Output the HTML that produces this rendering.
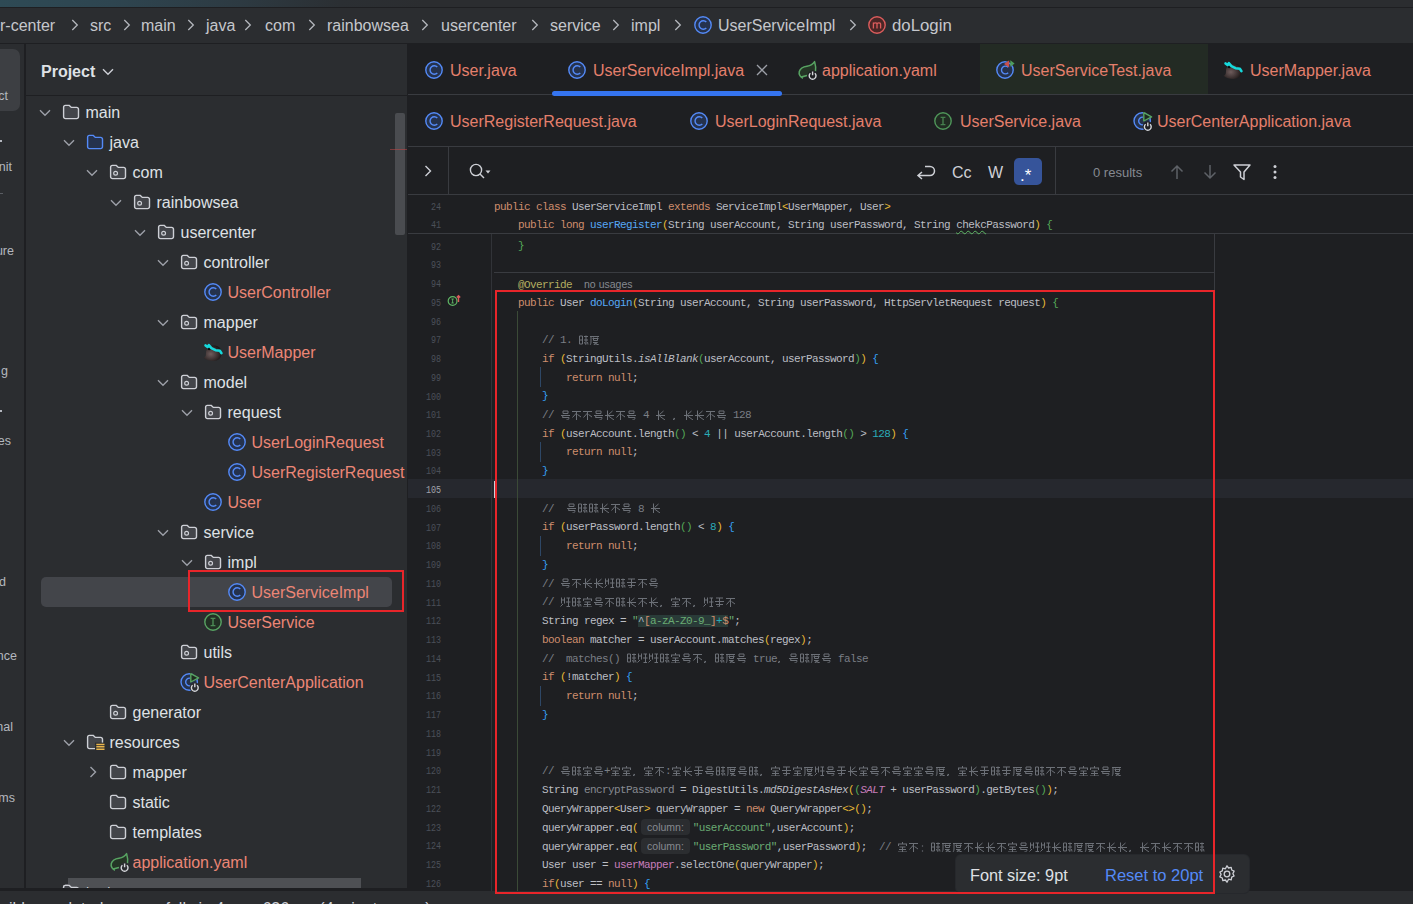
<!DOCTYPE html><html><head><meta charset="utf-8"><style>
html,body{margin:0;padding:0}
body{width:1413px;height:904px;overflow:hidden;position:relative;background:#1E1F22;font-family:"Liberation Sans",sans-serif}
.b{position:absolute}
.t{position:absolute;white-space:pre}
.s{font-family:"Liberation Sans",sans-serif}
.m{font-family:"Liberation Mono",monospace}
.cl{position:absolute;white-space:pre;font-family:"Liberation Mono",monospace;font-size:11px;line-height:21px;letter-spacing:-0.6px;color:#BCBEC4}
.k{color:#CF8E6D}.fn{color:#56A8F5}.st{color:#6AAB73}.n{color:#2AACB8}.c{color:#7A7E85}.an{color:#B3AE60}
.it{font-style:italic}.pu{color:#C77DBB}.un{color:#868A91}
.y{color:#E8BA36}.g{color:#54A857}.bl{color:#359FF4}
.cg{display:inline-block;width:11px;height:10px;vertical-align:-1.5px;overflow:visible}
.cjx{display:inline-block;width:11px;height:10px;vertical-align:-1px;background:linear-gradient(90deg,transparent 0 1px,rgba(122,126,133,.35) 1px 2px,transparent 2px 5px,rgba(122,126,133,.35) 5px 6px,transparent 6px 8px,rgba(122,126,133,.35) 8px 9px,transparent 9px),repeating-linear-gradient(180deg,rgba(122,126,133,.4) 0 1px,transparent 1px 3px);}
.hint{display:inline;font-family:"Liberation Sans",sans-serif;letter-spacing:0;font-size:10.5px;color:#868A91;background:#2B2D30;border-radius:4px;padding:2px 6px;margin:0 3px}
</style></head><body>
<svg width="0" height="0" style="position:absolute"><defs>
<symbol id="g0" viewBox="0 0 11 10"><path d="M1 1.5H10M5.5 1.5V10M5.5 3L1.5 7.5M6.5 4.5L10 7" stroke="#6C7077" stroke-width="1" fill="none"/></symbol>
<symbol id="g1" viewBox="0 0 11 10"><path d="M3 1H8V3.5H3ZM1 5.5H10M3 5.5L2.5 7.5H9C9 9.5 8 10 6.5 9.8" stroke="#6C7077" stroke-width="1" fill="none"/></symbol>
<symbol id="g2" viewBox="0 0 11 10"><path d="M3.5 0.5V10M1 5.5H10M8.5 1L4.5 4.5M4.5 6L10 10" stroke="#6C7077" stroke-width="1" fill="none"/></symbol>
<symbol id="g3" viewBox="0 0 11 10"><path d="M1 1.5H10M2 1.5V7C2 8.5 1.5 9.5 1 10M3.5 3.5H9.5M4.5 2.5V5.5H8.5V2.5M4 7.5H8.5L4.5 10M5.5 8.5L10 10" stroke="#6C7077" stroke-width="1" fill="none"/></symbol>
<symbol id="g4" viewBox="0 0 11 10"><path d="M1.5 0.5V6.5M1.5 3H4.5M4.5 0.5V6.5M0.5 9.5L3 7M6.5 1H10M8.5 1V9.5M6 5H10.5M6.5 9.5H10" stroke="#6C7077" stroke-width="1" fill="none"/></symbol>
<symbol id="g5" viewBox="0 0 11 10"><path d="M2 1H9M1 4.5H10M5.5 1V9.5C5.5 10 4.5 10 3.5 9.5M2 7.5H9" stroke="#6C7077" stroke-width="1" fill="none"/></symbol>
<symbol id="g6" viewBox="0 0 11 10"><path d="M1.5 1H4.5V9H1.5ZM1.5 5H4.5M6 1.5H10M8 0.5V9.5M6 5H10M6.5 7L7.5 9.5M9.5 7L10 9.5" stroke="#6C7077" stroke-width="1" fill="none"/></symbol>
<symbol id="g7" viewBox="0 0 11 10"><path d="M5.5 0V2M1 2H10M1.5 2V4M9.5 2V4M2.5 5H8.5M5.5 5V10M2 7.5H9M1 10H10" stroke="#6C7077" stroke-width="1" fill="none"/></symbol>
<symbol id="gc" viewBox="0 0 11 10"><path d="M2.5 8L1.5 10" stroke="#7A7E85" stroke-width="1.2" fill="none"/></symbol>
<symbol id="gk" viewBox="0 0 11 10"><path d="M3.5 3.5V4.5M3.5 8.5V9.5" stroke="#7A7E85" stroke-width="1.2" fill="none"/></symbol>
</defs></svg>

<div class="b" style="left:0px;top:0px;width:1413px;height:7px;background:linear-gradient(90deg,#2E4A55 0%,#2E4550 8%,#2D3A42 17%,#2B2F33 24%,#2B2D30 30%,#2B2D30 100%);"></div>
<div class="b" style="left:0px;top:7px;width:1413px;height:1px;background:#1E1F22;"></div>
<div class="b" style="left:0px;top:8px;width:1413px;height:35px;background:#2B2D30;"></div>
<div class="b" style="left:0px;top:43px;width:1413px;height:1px;background:#1E1F22;"></div>
<div class="t s" style="left:0px;top:18.46px;font-size:16px;line-height:16px;color:#C5C7CC;">r-center</div>
<div class="t s" style="left:90px;top:18.46px;font-size:16px;line-height:16px;color:#C5C7CC;">src</div>
<div class="t s" style="left:141px;top:18.46px;font-size:16px;line-height:16px;color:#C5C7CC;">main</div>
<div class="t s" style="left:206px;top:18.46px;font-size:16px;line-height:16px;color:#C5C7CC;">java</div>
<div class="t s" style="left:265px;top:18.46px;font-size:16px;line-height:16px;color:#C5C7CC;">com</div>
<div class="t s" style="left:327px;top:18.46px;font-size:16px;line-height:16px;color:#C5C7CC;">rainbowsea</div>
<div class="t s" style="left:441px;top:18.46px;font-size:16px;line-height:16px;color:#C5C7CC;">usercenter</div>
<div class="t s" style="left:550px;top:18.46px;font-size:16px;line-height:16px;color:#C5C7CC;">service</div>
<div class="t s" style="left:631px;top:18.46px;font-size:16px;line-height:16px;color:#C5C7CC;">impl</div>
<svg class="b" style="left:71px;top:19px" width="8" height="12" viewBox="0 0 8 12" fill="none"><path d="M1.3 1L6.3 6L1.3 11" stroke="#B4B7BD" stroke-width="1.3"/></svg>
<svg class="b" style="left:123px;top:19px" width="8" height="12" viewBox="0 0 8 12" fill="none"><path d="M1.3 1L6.3 6L1.3 11" stroke="#B4B7BD" stroke-width="1.3"/></svg>
<svg class="b" style="left:187px;top:19px" width="8" height="12" viewBox="0 0 8 12" fill="none"><path d="M1.3 1L6.3 6L1.3 11" stroke="#B4B7BD" stroke-width="1.3"/></svg>
<svg class="b" style="left:244px;top:19px" width="8" height="12" viewBox="0 0 8 12" fill="none"><path d="M1.3 1L6.3 6L1.3 11" stroke="#B4B7BD" stroke-width="1.3"/></svg>
<svg class="b" style="left:308px;top:19px" width="8" height="12" viewBox="0 0 8 12" fill="none"><path d="M1.3 1L6.3 6L1.3 11" stroke="#B4B7BD" stroke-width="1.3"/></svg>
<svg class="b" style="left:421px;top:19px" width="8" height="12" viewBox="0 0 8 12" fill="none"><path d="M1.3 1L6.3 6L1.3 11" stroke="#B4B7BD" stroke-width="1.3"/></svg>
<svg class="b" style="left:531px;top:19px" width="8" height="12" viewBox="0 0 8 12" fill="none"><path d="M1.3 1L6.3 6L1.3 11" stroke="#B4B7BD" stroke-width="1.3"/></svg>
<svg class="b" style="left:612px;top:19px" width="8" height="12" viewBox="0 0 8 12" fill="none"><path d="M1.3 1L6.3 6L1.3 11" stroke="#B4B7BD" stroke-width="1.3"/></svg>
<svg class="b" style="left:674px;top:19px" width="8" height="12" viewBox="0 0 8 12" fill="none"><path d="M1.3 1L6.3 6L1.3 11" stroke="#B4B7BD" stroke-width="1.3"/></svg>
<svg class="b" style="left:849px;top:19px" width="8" height="12" viewBox="0 0 8 12" fill="none"><path d="M1.3 1L6.3 6L1.3 11" stroke="#B4B7BD" stroke-width="1.3"/></svg>
<svg class="b" style="left:694px;top:16px" width="18" height="18" viewBox="0 0 18 18" fill="none"><circle cx="9" cy="9" r="8.2" fill="#25324D" stroke="#548AF7" stroke-width="1.4"/><path d="M12.3 6.1A4.2 4.2 0 1 0 12.3 11.9" stroke="#548AF7" stroke-width="1.4"/></svg>
<div class="t s" style="left:718px;top:18.46px;font-size:16px;line-height:16px;color:#C5C7CC;">UserServiceImpl</div>
<svg class="b" style="left:868px;top:16px" width="18" height="18" viewBox="0 0 18 18" fill="none"><circle cx="9" cy="9" r="8.2" fill="#4A2626" stroke="#DB5C5C" stroke-width="1.4"/><path d="M5.4 12.4V6.6M5.4 8.2c0-1.7 3.6-2 3.6 0v4.2M9 8.2c0-1.7 3.6-2 3.6 0v4.2" stroke="#DB5C5C" stroke-width="1.3"/></svg>
<div class="t s" style="left:892px;top:17.78px;font-size:16.8px;line-height:16.8px;color:#C5C7CC;">doLogin</div>
<div class="b" style="left:0px;top:44px;width:24px;height:847px;background:#2B2D30;"></div>
<div class="b" style="left:24px;top:44px;width:2px;height:847px;background:#1E1F22;"></div>
<div class="b" style="left:0px;top:49px;width:20px;height:62px;background:#3D3F43;border-radius:0 7px 7px 0"></div>
<div class="t s" style="left:0px;top:90.42px;font-size:12.5px;line-height:12.5px;color:#B4B8BF;transform:translateX(calc(8px - 100%));">ct</div>
<div class="t s" style="left:0px;top:161.42px;font-size:12.5px;line-height:12.5px;color:#B4B8BF;transform:translateX(calc(12px - 100%));">nit</div>
<div class="t s" style="left:0px;top:245.42px;font-size:12.5px;line-height:12.5px;color:#B4B8BF;transform:translateX(calc(14px - 100%));">ure</div>
<div class="t s" style="left:0px;top:365.42px;font-size:12.5px;line-height:12.5px;color:#B4B8BF;transform:translateX(calc(8px - 100%));">g</div>
<div class="t s" style="left:0px;top:435.42px;font-size:12.5px;line-height:12.5px;color:#B4B8BF;transform:translateX(calc(11px - 100%));">es</div>
<div class="t s" style="left:0px;top:576.42px;font-size:12.5px;line-height:12.5px;color:#B4B8BF;transform:translateX(calc(6px - 100%));">d</div>
<div class="t s" style="left:0px;top:650.42px;font-size:12.5px;line-height:12.5px;color:#B4B8BF;transform:translateX(calc(17px - 100%));">nce</div>
<div class="t s" style="left:0px;top:721.42px;font-size:12.5px;line-height:12.5px;color:#B4B8BF;transform:translateX(calc(13px - 100%));">nal</div>
<div class="t s" style="left:0px;top:792.42px;font-size:12.5px;line-height:12.5px;color:#B4B8BF;transform:translateX(calc(15px - 100%));">ms</div>
<div class="b" style="left:0px;top:140px;width:2px;height:2px;background:#B4B8BF;"></div>
<div class="b" style="left:0px;top:193px;width:3px;height:1px;background:#5A5D63;"></div>
<div class="b" style="left:0px;top:410px;width:2px;height:2px;background:#B4B8BF;"></div>
<div class="b" style="left:26px;top:44px;width:381px;height:847px;background:#2B2D30;"></div>
<div class="b" style="left:26px;top:95px;width:381px;height:1px;background:#1E1F22;"></div>
<div class="t s" style="left:41px;top:64.46px;font-size:16px;line-height:16px;color:#DFE1E5;font-weight:bold;">Project</div>
<svg class="b" style="left:102px;top:68px" width="12" height="8" viewBox="0 0 12 8" fill="none"><path d="M1 1.2L6 6.2L11 1.2" stroke="#CED0D6" stroke-width="1.4"/></svg>
<div class="b" style="left:395px;top:113px;width:10px;height:122px;background:#4A4C50;border-radius:2px"></div>
<div class="b" style="left:390px;top:149px;width:17px;height:1px;background:rgba(190,70,70,0.55);"></div>
<div class="b" style="left:41px;top:577px;width:351px;height:30px;background:#43454A;border-radius:5px"></div>
<svg class="b" style="left:39px;top:109px" width="12" height="8" viewBox="0 0 12 8" fill="none"><path d="M1 1.2L6 6.2L11 1.2" stroke="#9DA0A8" stroke-width="1.4"/></svg>
<svg class="b" style="left:62px;top:104px" width="20" height="17" viewBox="0 0 20 17" fill="none"><path d="M1.6 3.2a1.8 1.8 0 0 1 1.8-1.8h3.9l2 2h5.4a1.8 1.8 0 0 1 1.8 1.8v7.6a1.8 1.8 0 0 1-1.8 1.8H3.4a1.8 1.8 0 0 1-1.8-1.8z" fill="#43454A" stroke="#CED0D6" stroke-width="1.4"/></svg>
<div class="t s" style="left:85.5px;top:105.46px;font-size:16px;line-height:16px;color:#DFE1E5;">main</div>
<svg class="b" style="left:63px;top:139px" width="12" height="8" viewBox="0 0 12 8" fill="none"><path d="M1 1.2L6 6.2L11 1.2" stroke="#9DA0A8" stroke-width="1.4"/></svg>
<svg class="b" style="left:86px;top:134px" width="20" height="17" viewBox="0 0 20 17" fill="none"><path d="M1.6 3.2a1.8 1.8 0 0 1 1.8-1.8h3.9l2 2h5.4a1.8 1.8 0 0 1 1.8 1.8v7.6a1.8 1.8 0 0 1-1.8 1.8H3.4a1.8 1.8 0 0 1-1.8-1.8z" fill="#25324D" stroke="#548AF7" stroke-width="1.4"/></svg>
<div class="t s" style="left:109.5px;top:135.46px;font-size:16px;line-height:16px;color:#DFE1E5;">java</div>
<svg class="b" style="left:86px;top:169px" width="12" height="8" viewBox="0 0 12 8" fill="none"><path d="M1 1.2L6 6.2L11 1.2" stroke="#9DA0A8" stroke-width="1.4"/></svg>
<svg class="b" style="left:109px;top:164px" width="20" height="17" viewBox="0 0 20 17" fill="none"><path d="M1.6 3.2a1.8 1.8 0 0 1 1.8-1.8h3.9l2 2h5.4a1.8 1.8 0 0 1 1.8 1.8v7.6a1.8 1.8 0 0 1-1.8 1.8H3.4a1.8 1.8 0 0 1-1.8-1.8z" fill="#43454A" stroke="#CED0D6" stroke-width="1.4"/><circle cx="6.6" cy="9.2" r="1.9" stroke="#CED0D6" stroke-width="1.2"/></svg>
<div class="t s" style="left:132.5px;top:165.46px;font-size:16px;line-height:16px;color:#DFE1E5;">com</div>
<svg class="b" style="left:110px;top:199px" width="12" height="8" viewBox="0 0 12 8" fill="none"><path d="M1 1.2L6 6.2L11 1.2" stroke="#9DA0A8" stroke-width="1.4"/></svg>
<svg class="b" style="left:133px;top:194px" width="20" height="17" viewBox="0 0 20 17" fill="none"><path d="M1.6 3.2a1.8 1.8 0 0 1 1.8-1.8h3.9l2 2h5.4a1.8 1.8 0 0 1 1.8 1.8v7.6a1.8 1.8 0 0 1-1.8 1.8H3.4a1.8 1.8 0 0 1-1.8-1.8z" fill="#43454A" stroke="#CED0D6" stroke-width="1.4"/><circle cx="6.6" cy="9.2" r="1.9" stroke="#CED0D6" stroke-width="1.2"/></svg>
<div class="t s" style="left:156.5px;top:195.46px;font-size:16px;line-height:16px;color:#DFE1E5;">rainbowsea</div>
<svg class="b" style="left:134px;top:229px" width="12" height="8" viewBox="0 0 12 8" fill="none"><path d="M1 1.2L6 6.2L11 1.2" stroke="#9DA0A8" stroke-width="1.4"/></svg>
<svg class="b" style="left:157px;top:224px" width="20" height="17" viewBox="0 0 20 17" fill="none"><path d="M1.6 3.2a1.8 1.8 0 0 1 1.8-1.8h3.9l2 2h5.4a1.8 1.8 0 0 1 1.8 1.8v7.6a1.8 1.8 0 0 1-1.8 1.8H3.4a1.8 1.8 0 0 1-1.8-1.8z" fill="#43454A" stroke="#CED0D6" stroke-width="1.4"/><circle cx="6.6" cy="9.2" r="1.9" stroke="#CED0D6" stroke-width="1.2"/></svg>
<div class="t s" style="left:180.5px;top:225.46px;font-size:16px;line-height:16px;color:#DFE1E5;">usercenter</div>
<svg class="b" style="left:157px;top:259px" width="12" height="8" viewBox="0 0 12 8" fill="none"><path d="M1 1.2L6 6.2L11 1.2" stroke="#9DA0A8" stroke-width="1.4"/></svg>
<svg class="b" style="left:180px;top:254px" width="20" height="17" viewBox="0 0 20 17" fill="none"><path d="M1.6 3.2a1.8 1.8 0 0 1 1.8-1.8h3.9l2 2h5.4a1.8 1.8 0 0 1 1.8 1.8v7.6a1.8 1.8 0 0 1-1.8 1.8H3.4a1.8 1.8 0 0 1-1.8-1.8z" fill="#43454A" stroke="#CED0D6" stroke-width="1.4"/><circle cx="6.6" cy="9.2" r="1.9" stroke="#CED0D6" stroke-width="1.2"/></svg>
<div class="t s" style="left:203.5px;top:255.46px;font-size:16px;line-height:16px;color:#DFE1E5;">controller</div>
<svg class="b" style="left:204px;top:283px" width="18" height="18" viewBox="0 0 18 18" fill="none"><circle cx="9" cy="9" r="8.2" fill="#25324D" stroke="#548AF7" stroke-width="1.4"/><path d="M12.3 6.1A4.2 4.2 0 1 0 12.3 11.9" stroke="#548AF7" stroke-width="1.4"/></svg>
<div class="t s" style="left:227.5px;top:285.46px;font-size:16px;line-height:16px;color:#EC8676;">UserController</div>
<svg class="b" style="left:157px;top:319px" width="12" height="8" viewBox="0 0 12 8" fill="none"><path d="M1 1.2L6 6.2L11 1.2" stroke="#9DA0A8" stroke-width="1.4"/></svg>
<svg class="b" style="left:180px;top:314px" width="20" height="17" viewBox="0 0 20 17" fill="none"><path d="M1.6 3.2a1.8 1.8 0 0 1 1.8-1.8h3.9l2 2h5.4a1.8 1.8 0 0 1 1.8 1.8v7.6a1.8 1.8 0 0 1-1.8 1.8H3.4a1.8 1.8 0 0 1-1.8-1.8z" fill="#43454A" stroke="#CED0D6" stroke-width="1.4"/><circle cx="6.6" cy="9.2" r="1.9" stroke="#CED0D6" stroke-width="1.2"/></svg>
<div class="t s" style="left:203.5px;top:315.46px;font-size:16px;line-height:16px;color:#DFE1E5;">mapper</div>
<svg class="b" style="left:203px;top:343px" width="20" height="20" viewBox="0 0 20 20" fill="none"><defs><radialGradient id="bg1" cx="0.4" cy="0.55" r="0.65"><stop offset="0" stop-color="#6E5C5C"/><stop offset="0.55" stop-color="#3E3333"/><stop offset="1" stop-color="#141111"/></radialGradient></defs><path d="M3 9C3.5 4.5 7.5 2.2 11.5 2.5C16 3 19 6.2 18.8 10.5C18.6 15 15 18 10.5 18C6.5 18 3 17 0.5 14.8C3 14 3 12 3 9Z" fill="url(#bg1)"/><circle cx="6.2" cy="5.6" r="1.7" fill="#0A0A0A"/><path d="M2.6 2.4L4.6 4L5.8 2.2L8.4 5.2L12.5 7.2L17 7.8L18.4 10.2" stroke="#16D9DC" stroke-width="2.6" stroke-linejoin="round" stroke-linecap="round"/></svg>
<div class="t s" style="left:227.5px;top:345.46px;font-size:16px;line-height:16px;color:#EC8676;">UserMapper</div>
<svg class="b" style="left:157px;top:379px" width="12" height="8" viewBox="0 0 12 8" fill="none"><path d="M1 1.2L6 6.2L11 1.2" stroke="#9DA0A8" stroke-width="1.4"/></svg>
<svg class="b" style="left:180px;top:374px" width="20" height="17" viewBox="0 0 20 17" fill="none"><path d="M1.6 3.2a1.8 1.8 0 0 1 1.8-1.8h3.9l2 2h5.4a1.8 1.8 0 0 1 1.8 1.8v7.6a1.8 1.8 0 0 1-1.8 1.8H3.4a1.8 1.8 0 0 1-1.8-1.8z" fill="#43454A" stroke="#CED0D6" stroke-width="1.4"/><circle cx="6.6" cy="9.2" r="1.9" stroke="#CED0D6" stroke-width="1.2"/></svg>
<div class="t s" style="left:203.5px;top:375.46px;font-size:16px;line-height:16px;color:#DFE1E5;">model</div>
<svg class="b" style="left:181px;top:409px" width="12" height="8" viewBox="0 0 12 8" fill="none"><path d="M1 1.2L6 6.2L11 1.2" stroke="#9DA0A8" stroke-width="1.4"/></svg>
<svg class="b" style="left:204px;top:404px" width="20" height="17" viewBox="0 0 20 17" fill="none"><path d="M1.6 3.2a1.8 1.8 0 0 1 1.8-1.8h3.9l2 2h5.4a1.8 1.8 0 0 1 1.8 1.8v7.6a1.8 1.8 0 0 1-1.8 1.8H3.4a1.8 1.8 0 0 1-1.8-1.8z" fill="#43454A" stroke="#CED0D6" stroke-width="1.4"/><circle cx="6.6" cy="9.2" r="1.9" stroke="#CED0D6" stroke-width="1.2"/></svg>
<div class="t s" style="left:227.5px;top:405.46px;font-size:16px;line-height:16px;color:#DFE1E5;">request</div>
<svg class="b" style="left:228px;top:433px" width="18" height="18" viewBox="0 0 18 18" fill="none"><circle cx="9" cy="9" r="8.2" fill="#25324D" stroke="#548AF7" stroke-width="1.4"/><path d="M12.3 6.1A4.2 4.2 0 1 0 12.3 11.9" stroke="#548AF7" stroke-width="1.4"/></svg>
<div class="t s" style="left:251.5px;top:435.46px;font-size:16px;line-height:16px;color:#EC8676;">UserLoginRequest</div>
<svg class="b" style="left:228px;top:463px" width="18" height="18" viewBox="0 0 18 18" fill="none"><circle cx="9" cy="9" r="8.2" fill="#25324D" stroke="#548AF7" stroke-width="1.4"/><path d="M12.3 6.1A4.2 4.2 0 1 0 12.3 11.9" stroke="#548AF7" stroke-width="1.4"/></svg>
<div class="t s" style="left:251.5px;top:465.46px;font-size:16px;line-height:16px;color:#EC8676;">UserRegisterRequest</div>
<svg class="b" style="left:204px;top:493px" width="18" height="18" viewBox="0 0 18 18" fill="none"><circle cx="9" cy="9" r="8.2" fill="#25324D" stroke="#548AF7" stroke-width="1.4"/><path d="M12.3 6.1A4.2 4.2 0 1 0 12.3 11.9" stroke="#548AF7" stroke-width="1.4"/></svg>
<div class="t s" style="left:227.5px;top:495.46px;font-size:16px;line-height:16px;color:#EC8676;">User</div>
<svg class="b" style="left:157px;top:529px" width="12" height="8" viewBox="0 0 12 8" fill="none"><path d="M1 1.2L6 6.2L11 1.2" stroke="#9DA0A8" stroke-width="1.4"/></svg>
<svg class="b" style="left:180px;top:524px" width="20" height="17" viewBox="0 0 20 17" fill="none"><path d="M1.6 3.2a1.8 1.8 0 0 1 1.8-1.8h3.9l2 2h5.4a1.8 1.8 0 0 1 1.8 1.8v7.6a1.8 1.8 0 0 1-1.8 1.8H3.4a1.8 1.8 0 0 1-1.8-1.8z" fill="#43454A" stroke="#CED0D6" stroke-width="1.4"/><circle cx="6.6" cy="9.2" r="1.9" stroke="#CED0D6" stroke-width="1.2"/></svg>
<div class="t s" style="left:203.5px;top:525.46px;font-size:16px;line-height:16px;color:#DFE1E5;">service</div>
<svg class="b" style="left:181px;top:559px" width="12" height="8" viewBox="0 0 12 8" fill="none"><path d="M1 1.2L6 6.2L11 1.2" stroke="#9DA0A8" stroke-width="1.4"/></svg>
<svg class="b" style="left:204px;top:554px" width="20" height="17" viewBox="0 0 20 17" fill="none"><path d="M1.6 3.2a1.8 1.8 0 0 1 1.8-1.8h3.9l2 2h5.4a1.8 1.8 0 0 1 1.8 1.8v7.6a1.8 1.8 0 0 1-1.8 1.8H3.4a1.8 1.8 0 0 1-1.8-1.8z" fill="#43454A" stroke="#CED0D6" stroke-width="1.4"/><circle cx="6.6" cy="9.2" r="1.9" stroke="#CED0D6" stroke-width="1.2"/></svg>
<div class="t s" style="left:227.5px;top:555.46px;font-size:16px;line-height:16px;color:#DFE1E5;">impl</div>
<svg class="b" style="left:228px;top:583px" width="18" height="18" viewBox="0 0 18 18" fill="none"><circle cx="9" cy="9" r="8.2" fill="#25324D" stroke="#548AF7" stroke-width="1.4"/><path d="M12.3 6.1A4.2 4.2 0 1 0 12.3 11.9" stroke="#548AF7" stroke-width="1.4"/></svg>
<div class="t s" style="left:251.5px;top:585.46px;font-size:16px;line-height:16px;color:#EC8676;">UserServiceImpl</div>
<svg class="b" style="left:204px;top:613px" width="18" height="18" viewBox="0 0 18 18" fill="none"><circle cx="9" cy="9" r="8.2" fill="#223024" stroke="#58A463" stroke-width="1.4"/><path d="M6.6 5.4h4.8M9 5.4v7.2M6.6 12.6h4.8" stroke="#58A463" stroke-width="1.4" opacity="0.8"/></svg>
<div class="t s" style="left:227.5px;top:615.46px;font-size:16px;line-height:16px;color:#EC8676;">UserService</div>
<svg class="b" style="left:180px;top:644px" width="20" height="17" viewBox="0 0 20 17" fill="none"><path d="M1.6 3.2a1.8 1.8 0 0 1 1.8-1.8h3.9l2 2h5.4a1.8 1.8 0 0 1 1.8 1.8v7.6a1.8 1.8 0 0 1-1.8 1.8H3.4a1.8 1.8 0 0 1-1.8-1.8z" fill="#43454A" stroke="#CED0D6" stroke-width="1.4"/><circle cx="6.6" cy="9.2" r="1.9" stroke="#CED0D6" stroke-width="1.2"/></svg>
<div class="t s" style="left:203.5px;top:645.46px;font-size:16px;line-height:16px;color:#DFE1E5;">utils</div>
<svg class="b" style="left:180px;top:672px" width="20" height="20" viewBox="0 0 20 20" fill="none"><circle cx="9.2" cy="10" r="8.2" fill="#25324D" stroke="#548AF7" stroke-width="1.4"/><path d="M12.4 7.3A3.9 3.9 0 1 0 12.4 12.7" stroke="#548AF7" stroke-width="1.4"/><path d="M10 0.6L19.6 5.8L10 11Z" fill="#2B2D30"/><path d="M10.8 1.6L18.6 5.8L10.8 10Z" fill="#1F2B20" stroke="#58A463" stroke-width="1.4" stroke-linejoin="round"/><circle cx="14.8" cy="15.4" r="5" fill="#2B2D30"/><path d="M12.6 13.2a3.4 3.4 0 1 0 4.4 0M14.8 11.6v3.6" stroke="#D5D7DB" stroke-width="1.4"/></svg>
<div class="t s" style="left:203.5px;top:675.46px;font-size:16px;line-height:16px;color:#EC8676;">UserCenterApplication</div>
<svg class="b" style="left:109px;top:704px" width="20" height="17" viewBox="0 0 20 17" fill="none"><path d="M1.6 3.2a1.8 1.8 0 0 1 1.8-1.8h3.9l2 2h5.4a1.8 1.8 0 0 1 1.8 1.8v7.6a1.8 1.8 0 0 1-1.8 1.8H3.4a1.8 1.8 0 0 1-1.8-1.8z" fill="#43454A" stroke="#CED0D6" stroke-width="1.4"/><circle cx="6.6" cy="9.2" r="1.9" stroke="#CED0D6" stroke-width="1.2"/></svg>
<div class="t s" style="left:132.5px;top:705.46px;font-size:16px;line-height:16px;color:#DFE1E5;">generator</div>
<svg class="b" style="left:63px;top:739px" width="12" height="8" viewBox="0 0 12 8" fill="none"><path d="M1 1.2L6 6.2L11 1.2" stroke="#9DA0A8" stroke-width="1.4"/></svg>
<svg class="b" style="left:86px;top:734px" width="20" height="17" viewBox="0 0 20 17" fill="none"><path d="M1.6 3.2a1.8 1.8 0 0 1 1.8-1.8h3.9l2 2h5.4a1.8 1.8 0 0 1 1.8 1.8v7.6a1.8 1.8 0 0 1-1.8 1.8H3.4a1.8 1.8 0 0 1-1.8-1.8z" fill="#43454A" stroke="#CED0D6" stroke-width="1.4"/><rect x="9" y="8.6" width="10" height="8" fill="#2B2D30"/><path d="M10.3 10.4h8.2M10.3 12.8h8.2M10.3 15.2h8.2" stroke="#E9B54C" stroke-width="1.5"/></svg>
<div class="t s" style="left:109.5px;top:735.46px;font-size:16px;line-height:16px;color:#DFE1E5;">resources</div>
<svg class="b" style="left:89px;top:766px" width="8" height="12" viewBox="0 0 8 12" fill="none"><path d="M1.5 1L6.5 6L1.5 11" stroke="#9DA0A8" stroke-width="1.4"/></svg>
<svg class="b" style="left:109px;top:764px" width="20" height="17" viewBox="0 0 20 17" fill="none"><path d="M1.6 3.2a1.8 1.8 0 0 1 1.8-1.8h3.9l2 2h5.4a1.8 1.8 0 0 1 1.8 1.8v7.6a1.8 1.8 0 0 1-1.8 1.8H3.4a1.8 1.8 0 0 1-1.8-1.8z" fill="#43454A" stroke="#CED0D6" stroke-width="1.4"/></svg>
<div class="t s" style="left:132.5px;top:765.46px;font-size:16px;line-height:16px;color:#DFE1E5;">mapper</div>
<svg class="b" style="left:109px;top:794px" width="20" height="17" viewBox="0 0 20 17" fill="none"><path d="M1.6 3.2a1.8 1.8 0 0 1 1.8-1.8h3.9l2 2h5.4a1.8 1.8 0 0 1 1.8 1.8v7.6a1.8 1.8 0 0 1-1.8 1.8H3.4a1.8 1.8 0 0 1-1.8-1.8z" fill="#43454A" stroke="#CED0D6" stroke-width="1.4"/></svg>
<div class="t s" style="left:132.5px;top:795.46px;font-size:16px;line-height:16px;color:#DFE1E5;">static</div>
<svg class="b" style="left:109px;top:824px" width="20" height="17" viewBox="0 0 20 17" fill="none"><path d="M1.6 3.2a1.8 1.8 0 0 1 1.8-1.8h3.9l2 2h5.4a1.8 1.8 0 0 1 1.8 1.8v7.6a1.8 1.8 0 0 1-1.8 1.8H3.4a1.8 1.8 0 0 1-1.8-1.8z" fill="#43454A" stroke="#CED0D6" stroke-width="1.4"/></svg>
<div class="t s" style="left:132.5px;top:825.46px;font-size:16px;line-height:16px;color:#DFE1E5;">templates</div>
<svg class="b" style="left:109px;top:852px" width="20" height="20" viewBox="0 0 20 20" fill="none"><path d="M6 18.2C3.5 17.5 1.5 14.5 2.3 11.5C3.2 8.3 6.5 6.7 10 6.2C13.5 5.7 16 4.3 17.6 1.6C18.6 5 19 8.5 18.5 11.5" fill="#243425" stroke="#58A463" stroke-width="1.5" stroke-linejoin="round"/><path d="M4 17L10 15.5" stroke="#58A463" stroke-width="1.5"/><circle cx="15.6" cy="15.4" r="5" fill="#2B2D30"/><path d="M13.4 13.2a3.4 3.4 0 1 0 4.4 0M15.6 11.6v3.6" stroke="#D5D7DB" stroke-width="1.4"/></svg>
<div class="t s" style="left:132.5px;top:855.46px;font-size:16px;line-height:16px;color:#EC8676;">application.yaml</div>
<svg class="b" style="left:62px;top:884px" width="20" height="17" viewBox="0 0 20 17" fill="none"><path d="M1.6 3.2a1.8 1.8 0 0 1 1.8-1.8h3.9l2 2h5.4a1.8 1.8 0 0 1 1.8 1.8v7.6a1.8 1.8 0 0 1-1.8 1.8H3.4a1.8 1.8 0 0 1-1.8-1.8z" fill="#43454A" stroke="#CED0D6" stroke-width="1.4"/></svg>
<div class="t s" style="left:85.5px;top:885.46px;font-size:16px;line-height:16px;color:#DFE1E5;">test</div>
<div class="b" style="left:68px;top:878px;width:293px;height:10px;background:#4E5054;"></div>
<svg class="b" style="left:62px;top:884px" width="20" height="17" viewBox="0 0 20 17" fill="none"><path d="M1.6 3.2a1.8 1.8 0 0 1 1.8-1.8h3.9l2 2h5.4a1.8 1.8 0 0 1 1.8 1.8v7.6a1.8 1.8 0 0 1-1.8 1.8H3.4a1.8 1.8 0 0 1-1.8-1.8z" fill="#43454A" stroke="#CED0D6" stroke-width="1.4"/></svg>
<div class="t s" style="left:85.5px;top:885.46px;font-size:16px;line-height:16px;color:#DFE1E5;">test</div>
<div class="b" style="left:188px;top:570px;width:216px;height:42px;background:transparent;border:2px solid #E8252A;box-sizing:border-box"></div>
<div class="b" style="left:0px;top:891px;width:1413px;height:13px;background:#2B2D30;"></div>
<div class="b" style="left:0px;top:888px;width:1413px;height:3px;background:#1E1F22;"></div>
<div class="t s" style="left:9px;top:900.96px;font-size:16px;line-height:16px;color:#CED0D6;">ild completed successfully in 4 sec, 636 ms (4 minutes ago)</div>
<div class="b" style="left:407px;top:44px;width:1px;height:847px;background:#1E1F22;"></div>
<div class="b" style="left:408px;top:94px;width:1005px;height:1px;background:#393B40;"></div>
<div class="b" style="left:408px;top:146px;width:1005px;height:1px;background:#393B40;"></div>
<div class="b" style="left:408px;top:194px;width:1005px;height:1px;background:#393B40;"></div>
<div class="b" style="left:980px;top:44px;width:228px;height:50px;background:#232B24;"></div>
<svg class="b" style="left:425px;top:61px" width="18" height="18" viewBox="0 0 18 18" fill="none"><circle cx="9" cy="9" r="8.2" fill="#25324D" stroke="#548AF7" stroke-width="1.4"/><path d="M12.3 6.1A4.2 4.2 0 1 0 12.3 11.9" stroke="#548AF7" stroke-width="1.4"/></svg>
<div class="t s" style="left:450px;top:63.46px;font-size:16px;line-height:16px;color:#E47F6C;">User.java</div>
<svg class="b" style="left:568px;top:61px" width="18" height="18" viewBox="0 0 18 18" fill="none"><circle cx="9" cy="9" r="8.2" fill="#25324D" stroke="#548AF7" stroke-width="1.4"/><path d="M12.3 6.1A4.2 4.2 0 1 0 12.3 11.9" stroke="#548AF7" stroke-width="1.4"/></svg>
<div class="t s" style="left:593px;top:63.46px;font-size:16px;line-height:16px;color:#E47F6C;">UserServiceImpl.java</div>
<svg class="b" style="left:797px;top:60px" width="20" height="20" viewBox="0 0 20 20" fill="none"><path d="M6 18.2C3.5 17.5 1.5 14.5 2.3 11.5C3.2 8.3 6.5 6.7 10 6.2C13.5 5.7 16 4.3 17.6 1.6C18.6 5 19 8.5 18.5 11.5" fill="#243425" stroke="#58A463" stroke-width="1.5" stroke-linejoin="round"/><path d="M4 17L10 15.5" stroke="#58A463" stroke-width="1.5"/><circle cx="15.6" cy="15.4" r="5" fill="#1E1F22"/><path d="M13.4 13.2a3.4 3.4 0 1 0 4.4 0M15.6 11.6v3.6" stroke="#D5D7DB" stroke-width="1.4"/></svg>
<div class="t s" style="left:822px;top:63.46px;font-size:16px;line-height:16px;color:#E47F6C;">application.yaml</div>
<svg class="b" style="left:996px;top:60px" width="20" height="20" viewBox="0 0 20 20" fill="none"><circle cx="9" cy="10" r="8.2" fill="#25324D" stroke="#548AF7" stroke-width="1.4"/><path d="M12.2 7.3A3.9 3.9 0 1 0 12.2 12.7" stroke="#548AF7" stroke-width="1.4"/><path d="M13.2 0.2V7.6L8 4Z" fill="#C9504C"/><path d="M14.3 0.2L18.6 3.4L14.3 6.8Z" fill="#4F9E5C"/></svg>
<div class="t s" style="left:1021px;top:63.46px;font-size:16px;line-height:16px;color:#E47F6C;">UserServiceTest.java</div>
<svg class="b" style="left:1223px;top:61px" width="20" height="20" viewBox="0 0 20 20" fill="none"><defs><radialGradient id="bg1" cx="0.4" cy="0.55" r="0.65"><stop offset="0" stop-color="#6E5C5C"/><stop offset="0.55" stop-color="#3E3333"/><stop offset="1" stop-color="#141111"/></radialGradient></defs><path d="M3 9C3.5 4.5 7.5 2.2 11.5 2.5C16 3 19 6.2 18.8 10.5C18.6 15 15 18 10.5 18C6.5 18 3 17 0.5 14.8C3 14 3 12 3 9Z" fill="url(#bg1)"/><circle cx="6.2" cy="5.6" r="1.7" fill="#0A0A0A"/><path d="M2.6 2.4L4.6 4L5.8 2.2L8.4 5.2L12.5 7.2L17 7.8L18.4 10.2" stroke="#16D9DC" stroke-width="2.6" stroke-linejoin="round" stroke-linecap="round"/></svg>
<div class="t s" style="left:1250px;top:63.46px;font-size:16px;line-height:16px;color:#E47F6C;">UserMapper.java</div>
<svg class="b" style="left:756px;top:64px" width="12" height="12" viewBox="0 0 12 12" fill="none"><path d="M1 1L11 11M11 1L1 11" stroke="#9DA0A8" stroke-width="1.3"/></svg>
<div class="b" style="left:552px;top:91px;width:230px;height:5px;background:#3574F0;border-radius:3px"></div>
<svg class="b" style="left:425px;top:112px" width="18" height="18" viewBox="0 0 18 18" fill="none"><circle cx="9" cy="9" r="8.2" fill="#25324D" stroke="#548AF7" stroke-width="1.4"/><path d="M12.3 6.1A4.2 4.2 0 1 0 12.3 11.9" stroke="#548AF7" stroke-width="1.4"/></svg>
<div class="t s" style="left:450px;top:114.46px;font-size:16px;line-height:16px;color:#E47F6C;">UserRegisterRequest.java</div>
<svg class="b" style="left:690px;top:112px" width="18" height="18" viewBox="0 0 18 18" fill="none"><circle cx="9" cy="9" r="8.2" fill="#25324D" stroke="#548AF7" stroke-width="1.4"/><path d="M12.3 6.1A4.2 4.2 0 1 0 12.3 11.9" stroke="#548AF7" stroke-width="1.4"/></svg>
<div class="t s" style="left:715px;top:114.46px;font-size:16px;line-height:16px;color:#E47F6C;">UserLoginRequest.java</div>
<svg class="b" style="left:934px;top:112px" width="18" height="18" viewBox="0 0 18 18" fill="none"><circle cx="9" cy="9" r="8.2" fill="#202B22" stroke="#4F965A" stroke-width="1.4"/><path d="M6.6 5.4h4.8M9 5.4v7.2M6.6 12.6h4.8" stroke="#4F965A" stroke-width="1.4" opacity="0.8"/></svg>
<div class="t s" style="left:960px;top:114.46px;font-size:16px;line-height:16px;color:#E47F6C;">UserService.java</div>
<svg class="b" style="left:1133px;top:111px" width="20" height="20" viewBox="0 0 20 20" fill="none"><circle cx="9.2" cy="10" r="8.2" fill="#25324D" stroke="#548AF7" stroke-width="1.4"/><path d="M12.4 7.3A3.9 3.9 0 1 0 12.4 12.7" stroke="#548AF7" stroke-width="1.4"/><path d="M10 0.6L19.6 5.8L10 11Z" fill="#1E1F22"/><path d="M10.8 1.6L18.6 5.8L10.8 10Z" fill="#1F2B20" stroke="#58A463" stroke-width="1.4" stroke-linejoin="round"/><circle cx="14.8" cy="15.4" r="5" fill="#1E1F22"/><path d="M12.6 13.2a3.4 3.4 0 1 0 4.4 0M14.8 11.6v3.6" stroke="#D5D7DB" stroke-width="1.4"/></svg>
<div class="t s" style="left:1157px;top:114.46px;font-size:16px;line-height:16px;color:#E47F6C;">UserCenterApplication.java</div>
<svg class="b" style="left:424px;top:165px" width="8" height="12" viewBox="0 0 8 12" fill="none"><path d="M1.5 1L6.5 6L1.5 11" stroke="#CED0D6" stroke-width="1.4"/></svg>
<div class="b" style="left:448px;top:147px;width:1px;height:47px;background:#393B40;"></div>
<svg class="b" style="left:468px;top:162px" width="24" height="20" viewBox="0 0 24 20" fill="none"><circle cx="8" cy="8" r="5.6" stroke="#CED0D6" stroke-width="1.4"/><path d="M12 12L16 16" stroke="#CED0D6" stroke-width="1.5"/><path d="M17.5 8.5h5l-2.5 3z" fill="#CED0D6"/></svg>
<svg class="b" style="left:916px;top:163px" width="22" height="18" viewBox="0 0 22 18" fill="none"><path d="M6 16L2 12.5L6 9M2.5 12.5H14a4.5 4.5 0 0 0 0-9H9" stroke="#CED0D6" stroke-width="1.5"/></svg>
<div class="t s" style="left:952px;top:165.46px;font-size:16px;line-height:16px;color:#CED0D6;">Cc</div>
<div class="t s" style="left:988px;top:165.46px;font-size:16px;line-height:16px;color:#CED0D6;">W</div>
<div class="b" style="left:1014px;top:158px;width:28px;height:27px;background:#36549A;border-radius:5px"></div>
<div class="t s" style="left:1020px;top:166.61px;font-size:17px;line-height:17px;color:#FFFFFF;">.*</div>
<div class="b" style="left:1055px;top:147px;width:1px;height:47px;background:#393B40;"></div>
<div class="t s" style="left:1093px;top:166.00px;font-size:13px;line-height:13px;color:#868A91;">0 results</div>
<svg class="b" style="left:1170px;top:164px" width="14" height="16" viewBox="0 0 14 16" fill="none"><path d="M7 15V2M1.5 7.5L7 2L12.5 7.5" stroke="#5E6167" stroke-width="1.5"/></svg>
<svg class="b" style="left:1203px;top:164px" width="14" height="16" viewBox="0 0 14 16" fill="none"><path d="M7 1V14M1.5 8.5L7 14L12.5 8.5" stroke="#5E6167" stroke-width="1.5"/></svg>
<svg class="b" style="left:1232px;top:163px" width="20" height="18" viewBox="0 0 20 18" fill="none"><path d="M2 2H18L12 9V16.5L8.5 14V9Z" stroke="#CED0D6" stroke-width="1.5" stroke-linejoin="round"/></svg>
<svg class="b" style="left:1272px;top:164px" width="6" height="16" viewBox="0 0 6 16" fill="none"><circle cx="3" cy="2.5" r="1.5" fill="#CED0D6"/><circle cx="3" cy="8" r="1.5" fill="#CED0D6"/><circle cx="3" cy="13.5" r="1.5" fill="#CED0D6"/></svg>
<div class="b" style="left:408px;top:233px;width:1005px;height:1px;background:#393B40;"></div>
<div class="b" style="left:1214px;top:234px;width:1px;height:57px;background:#393B40;"></div>
<div class="b" style="left:494px;top:272px;width:720px;height:1px;background:#393B40;"></div>
<div class="b" style="left:408px;top:479px;width:1005px;height:19px;background:#26282E;"></div>
<div class="b" style="left:491px;top:234px;width:1px;height:657px;background:#313338;"></div>
<div class="b" style="left:494px;top:481px;width:1.5px;height:17px;background:#CED0D6;"></div>
<div class="b" style="left:517px;top:311px;width:1px;height:580px;background:#3B4A37;"></div>
<div class="b" style="left:540px;top:367px;width:1px;height:20px;background:#2E4766;"></div>
<div class="b" style="left:540px;top:442px;width:1px;height:20px;background:#2E4766;"></div>
<div class="b" style="left:540px;top:536px;width:1px;height:20px;background:#2E4766;"></div>
<div class="b" style="left:540px;top:686px;width:1px;height:20px;background:#2E4766;"></div>
<div class="cl" style="left:494px;top:197.07px"><span class="k">public class </span>UserServiceImpl <span class="k">extends </span>ServiceImpl<span class="y">&lt;</span>UserMapper, User<span class="y">&gt;</span></div>
<div class="t m" style="left:428.5px;top:203.34px;font-size:10px;line-height:10px;color:#4B5059;transform:scaleX(0.84);transform-origin:100% 50%">24</div>
<div class="cl" style="left:494px;top:215.07px">    <span class="k">public long </span><span class="fn">userRegister</span><span class="y">(</span>String userAccount, String userPassword, String <span style="text-decoration:underline wavy #5FB865;text-decoration-thickness:1px;text-underline-offset:2px">chekc</span>Password<span class="y">)</span> <span class="g">{</span></div>
<div class="t m" style="left:428.5px;top:221.34px;font-size:10px;line-height:10px;color:#4B5059;transform:scaleX(0.84);transform-origin:100% 50%">41</div>
<div class="cl" style="left:494px;top:236.35px">    <span class="g">}</span></div>
<div class="t m" style="left:428.5px;top:242.62px;font-size:10px;line-height:10px;color:#4B5059;transform:scaleX(0.84);transform-origin:100% 50%">92</div>
<div class="t m" style="left:428.5px;top:261.35px;font-size:10px;line-height:10px;color:#4B5059;transform:scaleX(0.84);transform-origin:100% 50%">93</div>
<div class="cl" style="left:494px;top:273.83px">    <span class="an">@Override</span><span style="font-family:'Liberation Sans',sans-serif;letter-spacing:0;font-size:10.5px;color:#868A91;margin-left:12px">no usages</span></div>
<div class="t m" style="left:428.5px;top:280.09px;font-size:10px;line-height:10px;color:#4B5059;transform:scaleX(0.84);transform-origin:100% 50%">94</div>
<div class="cl" style="left:494px;top:292.57px">    <span class="k">public </span>User <span class="fn">doLogin</span><span class="y">(</span>String userAccount, String userPassword, HttpServletRequest request<span class="y">)</span> <span class="g">{</span></div>
<div class="t m" style="left:428.5px;top:298.83px;font-size:10px;line-height:10px;color:#4B5059;transform:scaleX(0.84);transform-origin:100% 50%">95</div>
<div class="t m" style="left:428.5px;top:317.57px;font-size:10px;line-height:10px;color:#4B5059;transform:scaleX(0.84);transform-origin:100% 50%">96</div>
<div class="cl" style="left:494px;top:330.05px">        <span class="c">// 1. </span><svg class="cg"><use href="#g6"/></svg><svg class="cg"><use href="#g3"/></svg></div>
<div class="t m" style="left:428.5px;top:336.31px;font-size:10px;line-height:10px;color:#4B5059;transform:scaleX(0.84);transform-origin:100% 50%">97</div>
<div class="cl" style="left:494px;top:348.79px">        <span class="k">if </span><span class="y">(</span>StringUtils.<span class="it">isAllBlank</span><span class="g">(</span>userAccount, userPassword<span class="g">)</span><span class="y">)</span> <span class="bl">{</span></div>
<div class="t m" style="left:428.5px;top:355.06px;font-size:10px;line-height:10px;color:#4B5059;transform:scaleX(0.84);transform-origin:100% 50%">98</div>
<div class="cl" style="left:494px;top:367.53px">            <span class="k">return null</span>;</div>
<div class="t m" style="left:428.5px;top:373.79px;font-size:10px;line-height:10px;color:#4B5059;transform:scaleX(0.84);transform-origin:100% 50%">99</div>
<div class="cl" style="left:494px;top:386.27px">        <span class="bl">}</span></div>
<div class="t m" style="left:422.5px;top:392.53px;font-size:10px;line-height:10px;color:#4B5059;transform:scaleX(0.84);transform-origin:100% 50%">100</div>
<div class="cl" style="left:494px;top:405.01px">        <span class="c">// </span><svg class="cg"><use href="#g1"/></svg><svg class="cg"><use href="#g0"/></svg><svg class="cg"><use href="#g0"/></svg><svg class="cg"><use href="#g1"/></svg><svg class="cg"><use href="#g2"/></svg><svg class="cg"><use href="#g0"/></svg><svg class="cg"><use href="#g1"/></svg><span class="c"> 4 </span><svg class="cg"><use href="#g2"/></svg><span class="c"> </span><svg class="cg"><use href="#gc"/></svg><svg class="cg"><use href="#g2"/></svg><svg class="cg"><use href="#g2"/></svg><svg class="cg"><use href="#g0"/></svg><svg class="cg"><use href="#g1"/></svg><span class="c"> 128</span></div>
<div class="t m" style="left:422.5px;top:411.27px;font-size:10px;line-height:10px;color:#4B5059;transform:scaleX(0.84);transform-origin:100% 50%">101</div>
<div class="cl" style="left:494px;top:423.75px">        <span class="k">if </span><span class="y">(</span>userAccount.length<span class="g">()</span> &lt; <span class="n">4</span> || userAccount.length<span class="g">()</span> &gt; <span class="n">128</span><span class="y">)</span> <span class="bl">{</span></div>
<div class="t m" style="left:422.5px;top:430.01px;font-size:10px;line-height:10px;color:#4B5059;transform:scaleX(0.84);transform-origin:100% 50%">102</div>
<div class="cl" style="left:494px;top:442.49px">            <span class="k">return null</span>;</div>
<div class="t m" style="left:422.5px;top:448.75px;font-size:10px;line-height:10px;color:#4B5059;transform:scaleX(0.84);transform-origin:100% 50%">103</div>
<div class="cl" style="left:494px;top:461.23px">        <span class="bl">}</span></div>
<div class="t m" style="left:422.5px;top:467.49px;font-size:10px;line-height:10px;color:#4B5059;transform:scaleX(0.84);transform-origin:100% 50%">104</div>
<div class="t m" style="left:422.5px;top:486.23px;font-size:10px;line-height:10px;color:#A1A3AB;transform:scaleX(0.84);transform-origin:100% 50%">105</div>
<div class="cl" style="left:494px;top:498.71px">        <span class="c">//  </span><svg class="cg"><use href="#g1"/></svg><svg class="cg"><use href="#g6"/></svg><svg class="cg"><use href="#g6"/></svg><svg class="cg"><use href="#g2"/></svg><svg class="cg"><use href="#g0"/></svg><svg class="cg"><use href="#g1"/></svg><span class="c"> 8 </span><svg class="cg"><use href="#g2"/></svg></div>
<div class="t m" style="left:422.5px;top:504.97px;font-size:10px;line-height:10px;color:#4B5059;transform:scaleX(0.84);transform-origin:100% 50%">106</div>
<div class="cl" style="left:494px;top:517.45px">        <span class="k">if </span><span class="y">(</span>userPassword.length<span class="g">()</span> &lt; <span class="n">8</span><span class="y">)</span> <span class="bl">{</span></div>
<div class="t m" style="left:422.5px;top:523.72px;font-size:10px;line-height:10px;color:#4B5059;transform:scaleX(0.84);transform-origin:100% 50%">107</div>
<div class="cl" style="left:494px;top:536.19px">            <span class="k">return null</span>;</div>
<div class="t m" style="left:422.5px;top:542.46px;font-size:10px;line-height:10px;color:#4B5059;transform:scaleX(0.84);transform-origin:100% 50%">108</div>
<div class="cl" style="left:494px;top:554.93px">        <span class="bl">}</span></div>
<div class="t m" style="left:422.5px;top:561.19px;font-size:10px;line-height:10px;color:#4B5059;transform:scaleX(0.84);transform-origin:100% 50%">109</div>
<div class="cl" style="left:494px;top:573.67px">        <span class="c">// </span><svg class="cg"><use href="#g1"/></svg><svg class="cg"><use href="#g0"/></svg><svg class="cg"><use href="#g2"/></svg><svg class="cg"><use href="#g2"/></svg><svg class="cg"><use href="#g4"/></svg><svg class="cg"><use href="#g6"/></svg><svg class="cg"><use href="#g5"/></svg><svg class="cg"><use href="#g0"/></svg><svg class="cg"><use href="#g1"/></svg></div>
<div class="t m" style="left:422.5px;top:579.93px;font-size:10px;line-height:10px;color:#4B5059;transform:scaleX(0.84);transform-origin:100% 50%">110</div>
<div class="cl" style="left:494px;top:592.41px">        <span class="c">// </span><svg class="cg"><use href="#g4"/></svg><svg class="cg"><use href="#g6"/></svg><svg class="cg"><use href="#g7"/></svg><svg class="cg"><use href="#g1"/></svg><svg class="cg"><use href="#g0"/></svg><svg class="cg"><use href="#g6"/></svg><svg class="cg"><use href="#g2"/></svg><svg class="cg"><use href="#g0"/></svg><svg class="cg"><use href="#g2"/></svg><svg class="cg"><use href="#gc"/></svg><svg class="cg"><use href="#g7"/></svg><svg class="cg"><use href="#g0"/></svg><svg class="cg"><use href="#gc"/></svg><svg class="cg"><use href="#g4"/></svg><svg class="cg"><use href="#g5"/></svg><svg class="cg"><use href="#g0"/></svg></div>
<div class="t m" style="left:422.5px;top:598.67px;font-size:10px;line-height:10px;color:#4B5059;transform:scaleX(0.84);transform-origin:100% 50%">111</div>
<div class="cl" style="left:494px;top:611.15px">        String regex = <span class="st">&quot;</span><span style="background:#293B38"><span style="color:#A9B7C6">^</span><span class="k">[</span><span class="st">a-zA-Z0-9_</span><span class="k">]</span><span class="n">+</span><span class="k">$</span></span><span class="st">&quot;</span>;</div>
<div class="t m" style="left:422.5px;top:617.41px;font-size:10px;line-height:10px;color:#4B5059;transform:scaleX(0.84);transform-origin:100% 50%">112</div>
<div class="cl" style="left:494px;top:629.89px">        <span class="k">boolean </span>matcher = userAccount.matches<span class="y">(</span>regex<span class="y">)</span>;</div>
<div class="t m" style="left:422.5px;top:636.15px;font-size:10px;line-height:10px;color:#4B5059;transform:scaleX(0.84);transform-origin:100% 50%">113</div>
<div class="cl" style="left:494px;top:648.63px">        <span class="c">//  matches() </span><svg class="cg"><use href="#g6"/></svg><svg class="cg"><use href="#g4"/></svg><svg class="cg"><use href="#g4"/></svg><svg class="cg"><use href="#g6"/></svg><svg class="cg"><use href="#g7"/></svg><svg class="cg"><use href="#g1"/></svg><svg class="cg"><use href="#g0"/></svg><svg class="cg"><use href="#gc"/></svg><svg class="cg"><use href="#g6"/></svg><svg class="cg"><use href="#g3"/></svg><svg class="cg"><use href="#g1"/></svg><span class="c"> true</span><svg class="cg"><use href="#gc"/></svg><svg class="cg"><use href="#g1"/></svg><svg class="cg"><use href="#g6"/></svg><svg class="cg"><use href="#g3"/></svg><svg class="cg"><use href="#g1"/></svg><span class="c"> false</span></div>
<div class="t m" style="left:422.5px;top:654.89px;font-size:10px;line-height:10px;color:#4B5059;transform:scaleX(0.84);transform-origin:100% 50%">114</div>
<div class="cl" style="left:494px;top:667.37px">        <span class="k">if </span><span class="y">(</span>!matcher<span class="y">)</span> <span class="bl">{</span></div>
<div class="t m" style="left:422.5px;top:673.63px;font-size:10px;line-height:10px;color:#4B5059;transform:scaleX(0.84);transform-origin:100% 50%">115</div>
<div class="cl" style="left:494px;top:686.11px">            <span class="k">return null</span>;</div>
<div class="t m" style="left:422.5px;top:692.38px;font-size:10px;line-height:10px;color:#4B5059;transform:scaleX(0.84);transform-origin:100% 50%">116</div>
<div class="cl" style="left:494px;top:704.85px">        <span class="bl">}</span></div>
<div class="t m" style="left:422.5px;top:711.12px;font-size:10px;line-height:10px;color:#4B5059;transform:scaleX(0.84);transform-origin:100% 50%">117</div>
<div class="t m" style="left:422.5px;top:729.86px;font-size:10px;line-height:10px;color:#4B5059;transform:scaleX(0.84);transform-origin:100% 50%">118</div>
<div class="t m" style="left:422.5px;top:748.60px;font-size:10px;line-height:10px;color:#4B5059;transform:scaleX(0.84);transform-origin:100% 50%">119</div>
<div class="cl" style="left:494px;top:761.07px">        <span class="c">// </span><svg class="cg"><use href="#g1"/></svg><svg class="cg"><use href="#g6"/></svg><svg class="cg"><use href="#g7"/></svg><svg class="cg"><use href="#g1"/></svg><span class="c">+</span><svg class="cg"><use href="#g7"/></svg><svg class="cg"><use href="#g7"/></svg><svg class="cg"><use href="#gc"/></svg><svg class="cg"><use href="#g7"/></svg><svg class="cg"><use href="#g0"/></svg><span class="c">:</span><svg class="cg"><use href="#g7"/></svg><svg class="cg"><use href="#g2"/></svg><svg class="cg"><use href="#g5"/></svg><svg class="cg"><use href="#g1"/></svg><svg class="cg"><use href="#g6"/></svg><svg class="cg"><use href="#g3"/></svg><svg class="cg"><use href="#g1"/></svg><svg class="cg"><use href="#g6"/></svg><svg class="cg"><use href="#gc"/></svg><svg class="cg"><use href="#g7"/></svg><svg class="cg"><use href="#g5"/></svg><svg class="cg"><use href="#g7"/></svg><svg class="cg"><use href="#g3"/></svg><svg class="cg"><use href="#g4"/></svg><svg class="cg"><use href="#g1"/></svg><svg class="cg"><use href="#g5"/></svg><svg class="cg"><use href="#g2"/></svg><svg class="cg"><use href="#g7"/></svg><svg class="cg"><use href="#g1"/></svg><svg class="cg"><use href="#g0"/></svg><svg class="cg"><use href="#g1"/></svg><svg class="cg"><use href="#g7"/></svg><svg class="cg"><use href="#g7"/></svg><svg class="cg"><use href="#g1"/></svg><svg class="cg"><use href="#g3"/></svg><svg class="cg"><use href="#gc"/></svg><svg class="cg"><use href="#g7"/></svg><svg class="cg"><use href="#g2"/></svg><svg class="cg"><use href="#g5"/></svg><svg class="cg"><use href="#g6"/></svg><svg class="cg"><use href="#g5"/></svg><svg class="cg"><use href="#g3"/></svg><svg class="cg"><use href="#g1"/></svg><svg class="cg"><use href="#g6"/></svg><svg class="cg"><use href="#g0"/></svg><svg class="cg"><use href="#g0"/></svg><svg class="cg"><use href="#g1"/></svg><svg class="cg"><use href="#g7"/></svg><svg class="cg"><use href="#g7"/></svg><svg class="cg"><use href="#g1"/></svg><svg class="cg"><use href="#g3"/></svg></div>
<div class="t m" style="left:422.5px;top:767.34px;font-size:10px;line-height:10px;color:#4B5059;transform:scaleX(0.84);transform-origin:100% 50%">120</div>
<div class="cl" style="left:494px;top:779.81px">        String <span class="un">encryptPassword</span> = DigestUtils.<span class="it">md5DigestAsHex</span><span class="y">(</span><span class="g">(</span><span class="pu it">SALT</span> + userPassword<span class="g">)</span>.getBytes<span class="g">()</span><span class="y">)</span>;</div>
<div class="t m" style="left:422.5px;top:786.08px;font-size:10px;line-height:10px;color:#4B5059;transform:scaleX(0.84);transform-origin:100% 50%">121</div>
<div class="cl" style="left:494px;top:798.55px">        QueryWrapper<span class="y">&lt;</span>User<span class="y">&gt;</span> queryWrapper = <span class="k">new </span>QueryWrapper<span class="y">&lt;&gt;(</span><span class="y">)</span>;</div>
<div class="t m" style="left:422.5px;top:804.82px;font-size:10px;line-height:10px;color:#4B5059;transform:scaleX(0.84);transform-origin:100% 50%">122</div>
<div class="cl" style="left:494px;top:817.29px">        queryWrapper.eq<span class="y">(</span><span class="hint">column:</span><span class="st">&quot;userAccount&quot;</span>,userAccount<span class="y">)</span>;</div>
<div class="t m" style="left:422.5px;top:823.55px;font-size:10px;line-height:10px;color:#4B5059;transform:scaleX(0.84);transform-origin:100% 50%">123</div>
<div class="cl" style="left:494px;top:836.03px">        queryWrapper.eq<span class="y">(</span><span class="hint">column:</span><span class="st">&quot;userPassword&quot;</span>,userPassword<span class="y">)</span>;  <span class="c">// </span><svg class="cg"><use href="#g7"/></svg><svg class="cg"><use href="#g0"/></svg><svg class="cg"><use href="#gk"/></svg><svg class="cg"><use href="#g6"/></svg><svg class="cg"><use href="#g3"/></svg><svg class="cg"><use href="#g3"/></svg><svg class="cg"><use href="#g0"/></svg><svg class="cg"><use href="#g2"/></svg><svg class="cg"><use href="#g2"/></svg><svg class="cg"><use href="#g0"/></svg><svg class="cg"><use href="#g7"/></svg><svg class="cg"><use href="#g1"/></svg><svg class="cg"><use href="#g4"/></svg><svg class="cg"><use href="#g4"/></svg><svg class="cg"><use href="#g2"/></svg><svg class="cg"><use href="#g6"/></svg><svg class="cg"><use href="#g3"/></svg><svg class="cg"><use href="#g3"/></svg><svg class="cg"><use href="#g0"/></svg><svg class="cg"><use href="#g2"/></svg><svg class="cg"><use href="#g2"/></svg><svg class="cg"><use href="#gc"/></svg><svg class="cg"><use href="#g2"/></svg><svg class="cg"><use href="#g0"/></svg><svg class="cg"><use href="#g2"/></svg><svg class="cg"><use href="#g0"/></svg><svg class="cg"><use href="#g0"/></svg><svg class="cg"><use href="#g6"/></svg></div>
<div class="t m" style="left:422.5px;top:842.29px;font-size:10px;line-height:10px;color:#4B5059;transform:scaleX(0.84);transform-origin:100% 50%">124</div>
<div class="cl" style="left:494px;top:854.77px">        User user = <span class="pu">userMapper</span>.selectOne<span class="y">(</span>queryWrapper<span class="y">)</span>;</div>
<div class="t m" style="left:422.5px;top:861.03px;font-size:10px;line-height:10px;color:#4B5059;transform:scaleX(0.84);transform-origin:100% 50%">125</div>
<div class="cl" style="left:494px;top:873.51px">        <span class="k">if</span><span class="y">(</span>user == <span class="k">null</span><span class="y">)</span> <span class="bl">{</span></div>
<div class="t m" style="left:422.5px;top:879.77px;font-size:10px;line-height:10px;color:#4B5059;transform:scaleX(0.84);transform-origin:100% 50%">126</div>
<svg class="b" style="left:447px;top:294px" width="16" height="14" viewBox="0 0 16 14" fill="none"><circle cx="5.6" cy="7" r="4.4" stroke="#5FB865" stroke-width="1.2"/><path d="M4.4 5h2.4M5.6 5v4M4.4 9h2.4" stroke="#5FB865" stroke-width="0.9"/><path d="M11.5 8V1.8M9.8 3.6L11.5 1.8L13.2 3.6" stroke="#DB5C5C" stroke-width="1.4"/></svg>
<div class="b" style="left:956px;top:855px;width:293px;height:38px;background:#2B2D30;border-radius:5px;box-shadow:0 0 0 1px #26282C"></div>
<div class="t s" style="left:970px;top:867.20px;font-size:16.3px;line-height:16.3px;color:#DFE1E5;">Font size: 9pt</div>
<div class="t s" style="left:1105px;top:867.03px;font-size:16.5px;line-height:16.5px;color:#548AF7;">Reset to 20pt</div>
<svg class="b" style="left:1217px;top:864px" width="20" height="20" viewBox="0 0 20 20" fill="none"><path d="M10 1.8l1.6 2.2 2.6-.6.5 2.6 2.4 1.2-1.2 2.4 1.2 2.4-2.4 1.2-.5 2.6-2.6-.6L10 18.2l-1.6-2.2-2.6.6-.5-2.6-2.4-1.2 1.2-2.4-1.2-2.4 2.4-1.2.5-2.6 2.6.6z" stroke="#CED0D6" stroke-width="1.3" stroke-linejoin="round"/><circle cx="10" cy="10" r="2.8" stroke="#CED0D6" stroke-width="1.3"/></svg>
<div class="b" style="left:495px;top:290px;width:720px;height:604px;background:transparent;border:2px solid #E8252A;box-sizing:border-box"></div>
</body></html>
